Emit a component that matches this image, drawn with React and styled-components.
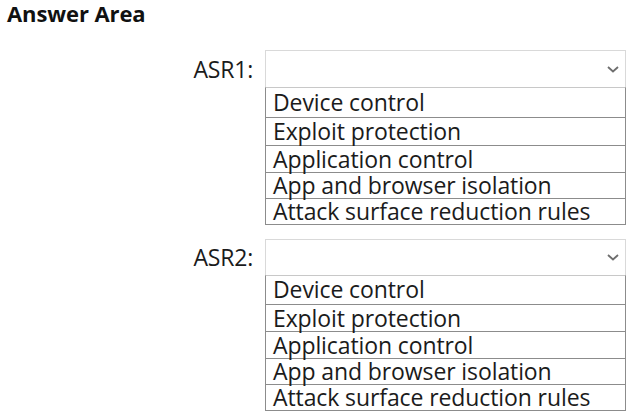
import React from "react";
import styled, { createGlobalStyle } from "styled-components";

const Global = createGlobalStyle`
  html, body { margin: 0; padding: 0; background: #ffffff; }
  body { font-family: "Open Sans", "Noto Sans", sans-serif; color: #1b1b1b; }
`;

const Page = styled.div`
  width: 636px;
  height: 419px;
  box-sizing: border-box;
  padding: 0 0 0 7px;
  display: flex;
  flex-direction: column;
`;

const Title = styled.h1`
  margin: 0;
  font-family: "Open Sans", sans-serif;
  font-weight: 700;
  font-size: 22px;
  line-height: 26px;
  letter-spacing: -0.1px;
  color: #111;
  height: 50px;
`;

const Groups = styled.div`
  display: flex;
  flex-direction: column;
  gap: 14px;
`;

const Group = styled.div`
  display: grid;
  grid-template-columns: 258px 361px;
  align-items: start;
`;

const Label = styled.div`
  height: ${(p) => p.$h}px;
  display: flex;
  align-items: center;
  justify-content: flex-end;
  padding-right: 12px;
  font-size: 23px;
  letter-spacing: -0.2px;
  color: #1b1b1b;
`;

const Column = styled.div`
  display: flex;
  flex-direction: column;
`;

const Select = styled.div`
  box-sizing: border-box;
  height: ${(p) => p.$h}px;
  border: 1px solid #d9d9d9;
  border-bottom: none;
  display: flex;
  align-items: center;
  justify-content: flex-end;
  padding-right: 6px;
`;

const List = styled.div`
  border: 1px solid #8c8c8c;
  border-top-color: #c8c8c8;
`;

const Option = styled.div`
  box-sizing: border-box;
  height: ${(p) => p.$h}px;
  padding-left: 7px;
  font-size: 23px;
  letter-spacing: -0.1px;
  line-height: ${(p) => p.$h - 1}px;
  color: #1b1b1b;
  border-top: 1px solid #8c8c8c;
  white-space: nowrap;
  &:first-child { border-top: none; }
`;

const Chevron = () => (
  <svg width="12" height="7" viewBox="0 0 12 7">
    <polyline points="1,1 6,5.5 11,1" fill="none" stroke="#6e6e6e" strokeWidth="1.8" />
  </svg>
);

const options = [
  "Device control",
  "Exploit protection",
  "Application control",
  "App and browser isolation",
  "Attack surface reduction rules",
];

const groups = [
  { label: "ASR1:", sel: 37, rows: [29, 28, 27, 26, 26] },
  { label: "ASR2:", sel: 36, rows: [28, 27, 27, 26, 26] },
];

export default function App() {
  return (
    <>
      <Global />
      <Page>
        <Title>Answer Area</Title>
        <Groups>
          {groups.map((g) => (
            <Group key={g.label}>
              <Label $h={g.sel}>{g.label}</Label>
              <Column>
                <Select $h={g.sel}>
                  <Chevron />
                </Select>
                <List>
                  {options.map((o, i) => (
                    <Option key={o} $h={g.rows[i]}>{o}</Option>
                  ))}
                </List>
              </Column>
            </Group>
          ))}
        </Groups>
      </Page>
    </>
  );
}
